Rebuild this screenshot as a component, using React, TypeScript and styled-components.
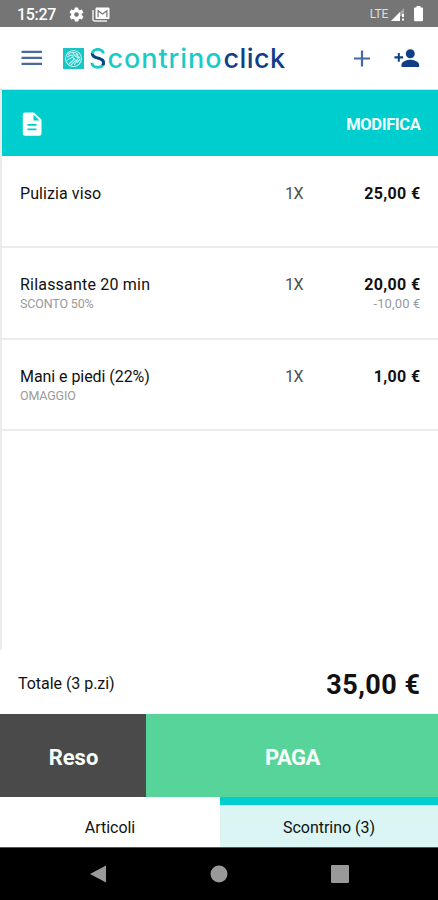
import React from 'react';
import styled, { createGlobalStyle } from 'styled-components';

const teal = '#00cdcd';
const navy = '#103f86';

const GlobalStyle = createGlobalStyle`
  * { box-sizing: border-box; }
  body { margin: 0; background: #fff; font-family: Roboto, sans-serif; }
  button { font-family: inherit; border: 0; padding: 0; background: none; }
`;

const Screen = styled.div`
  width: 438px;
  height: 900px;
  display: flex;
  flex-direction: column;
  background: #fff;
  color: #111;
  overflow: hidden;
`;

const StatusBar = styled.div`
  height: 27px;
  flex: none;
  display: flex;
  align-items: center;
  padding: 1px 15px 0 17px;
  background: #757575;
  color: #fff;
`;

const Clock = styled.span`
  width: 51px;
  font-size: 16px;
  font-weight: 500;
  letter-spacing: -0.3px;
`;

const StatusIcon = styled.svg<{ $gap?: number }>`
  flex: none;
  margin-right: ${(p) => p.$gap ?? 0}px;
  fill: #fff;
`;

const Network = styled.span`
  margin: 0 3px 0 auto;
  font-size: 12px;
  color: #dedede;
  letter-spacing: -0.2px;
`;

const AppBar = styled.header`
  height: 63px;
  flex: none;
  display: flex;
  align-items: center;
  padding: 0 18px 0 21px;
  border-bottom: 1px solid #b5eeee;
`;

const IconButton = styled.button<{ $gap?: number }>`
  display: flex;
  margin-right: ${(p) => p.$gap ?? 0}px;
`;

const Logo = styled.div`
  display: flex;
  align-items: center;
  margin-right: auto;
  font-family: Inter, sans-serif;
  font-size: 27px;
  font-weight: 550;
  line-height: 40px;
`;

const LogoMark = styled.svg`
  margin: 0 5px 0 0;
`;

const Brand = styled.span`
  padding-top: 2px;
  color: #1bcac8;
  letter-spacing: 0.95px;
`;

const BrandInitial = styled.span`
  color: transparent;
  background: linear-gradient(205deg, transparent 44%, ${navy} 45%, ${navy} 60%, transparent 61%), #1bcac8;
  background-clip: text;
  -webkit-background-clip: text;
`;

const BrandSuffix = styled.span`
  padding: 2px 0 0 1px;
  color: ${navy};
  letter-spacing: 0.45px;
`;

const Receipt = styled.main`
  height: 560px;
  flex: none;
  border-left: 2px solid #ebebeb;
`;

const ReceiptHeader = styled.div`
  height: 66px;
  display: flex;
  align-items: center;
  justify-content: space-between;
  padding: 2px 17.5px 0 19px;
  background: ${teal};
`;

const EditButton = styled.button`
  color: #effcfc;
  font-size: 16.5px;
  font-weight: 700;
  line-height: 20px;
  letter-spacing: -0.35px;
  padding-top: 1px;
`;

const Item = styled.div<{ $height: number; $top: number }>`
  height: ${(p) => p.$height}px;
  display: grid;
  grid-template-columns: 1fr 41px 96px;
  grid-template-rows: 20px 18px;
  padding: ${(p) => p.$top}px 17.5px 0 18px;
  border-bottom: 2px solid #ebebeb;
`;

const ItemName = styled.span<{ $spacing: number }>`
  font-size: 16px;
  font-weight: 450;
  line-height: 20px;
  letter-spacing: ${(p) => p.$spacing}px;
`;

const Quantity = styled.span`
  padding-left: 1.5px;
  font-size: 16px;
  line-height: 20px;
  color: #505050;
  letter-spacing: -0.5px;
`;

const Price = styled.span`
  text-align: right;
  font-size: 16px;
  font-weight: 700;
  line-height: 20px;
  letter-spacing: 0.35px;
`;

const Note = styled.span`
  grid-column: 1 / 3;
  font-size: 12.5px;
  line-height: 18px;
  letter-spacing: -0.16px;
  color: #9a9a9a;
`;

const Discount = styled.span`
  text-align: right;
  font-size: 13px;
  line-height: 18px;
  letter-spacing: 0.15px;
  color: #9a9a9a;
`;

const TotalRow = styled.div`
  height: 64px;
  flex: none;
  display: flex;
  align-items: center;
  justify-content: space-between;
  padding: 5px 17.5px 0 18px;
`;

const TotalLabel = styled.span`
  font-size: 16px;
  font-weight: 450;
  letter-spacing: -0.04px;
  padding-bottom: 2px;
`;

const TotalValue = styled.span`
  font-size: 27px;
  font-weight: 700;
  letter-spacing: 0.5px;
`;

const Actions = styled.div`
  height: 83px;
  flex: none;
  display: grid;
  grid-template-columns: 146px 1fr;
`;

const ActionButton = styled.button<{ $color: string; $spacing?: number }>`
  padding: 4px 0 0 1px;
  background: ${(p) => p.$color};
  color: #f8fffb;
  font-size: 22px;
  font-weight: 700;
  letter-spacing: ${(p) => p.$spacing ?? 0}px;
`;

const Tabs = styled.nav`
  height: 50px;
  flex: none;
  display: grid;
  grid-template-columns: 220px 1fr;
`;

const Tab = styled.button<{ $active?: boolean }>`
  border-top: 8px solid ${(p) => (p.$active ? teal : '#fff')};
  background: ${(p) => (p.$active ? '#daf5f4' : '#fff')};
  color: #111;
  font-size: 16px;
  font-weight: 450;
  letter-spacing: -0.04px;
  padding-top: 3px;
`;

const SystemNav = styled.footer`
  flex: 1;
  display: flex;
  align-items: center;
  justify-content: space-between;
  padding: 0 89px;
  border-top: 1px solid #555;
  background: #000;
`;

interface Line {
  name: string;
  spacing: number;
  price: string;
  height: number;
  top: number;
  note?: string;
  discount?: string;
}

const lines: Line[] = [
  { name: 'Pulizia viso', spacing: 0.08, price: '25,00 €', height: 92, top: 28 },
  { name: 'Rilassante 20 min', spacing: 0.2, price: '20,00 €', height: 92, top: 27, note: 'SCONTO 50%', discount: '-10,00 €' },
  { name: 'Mani e piedi (22%)', spacing: -0.06, price: '1,00 €', height: 91, top: 27, note: 'OMAGGIO' },
];

export default function App() {
  return (
    <>
      <GlobalStyle />
      <Screen>
        <StatusBar>
          <Clock>15:27</Clock>
          <StatusIcon $gap={7} width="17" height="17" viewBox="0 0 24 24">
            <path d="M19.4 13a7.5 7.5 0 0 0 0-2l2.1-1.6a.5.5 0 0 0 .1-.6l-2-3.5a.5.5 0 0 0-.6-.2l-2.5 1a7.3 7.3 0 0 0-1.7-1l-.4-2.6A.5.5 0 0 0 14 2h-4a.5.5 0 0 0-.5.4l-.4 2.7a7.3 7.3 0 0 0-1.7 1l-2.5-1a.5.5 0 0 0-.6.2l-2 3.5a.5.5 0 0 0 .1.6L4.6 11a7.5 7.5 0 0 0 0 2l-2.1 1.6a.5.5 0 0 0-.1.6l2 3.5c.1.2.4.3.6.2l2.5-1c.5.4 1.1.7 1.7 1l.4 2.7c0 .2.2.4.5.4h4c.2 0 .5-.2.5-.4l.4-2.7a7.3 7.3 0 0 0 1.7-1l2.5 1c.2.1.5 0 .6-.2l2-3.5a.5.5 0 0 0-.1-.6zM12 15.3a3.3 3.3 0 1 1 0-6.6 3.3 3.3 0 0 1 0 6.6z" />
          </StatusIcon>
          <StatusIcon width="18" height="15" viewBox="0 0 18 15">
            <path d="M1 3v9.5A1.5 1.5 0 0 0 2.5 14H15" fill="none" stroke="#eee" strokeWidth="1.5" />
            <path fillRule="evenodd" d="M4.5.5h12a1 1 0 0 1 1 1v9.5a1 1 0 0 1-1 1h-12a1 1 0 0 1-1-1V1.5a1 1 0 0 1 1-1zM5.5 2.5v7.7h1.2V5l3.8 2.8L14.3 5v5.2h1.2V2.5l-5 3.7z" />
          </StatusIcon>
          <Network>LTE</Network>
          <StatusIcon $gap={8} width="14" height="13" viewBox="0 0 14 13">
            <path d="M13 0v8H9v5H0z" opacity=".35" />
            <path d="M9 4v9H0zM11 6h2v3h-2zM11 10.5h2v2h-2z" />
          </StatusIcon>
          <StatusIcon $gap={-1} width="11" height="16" viewBox="0 0 11 16">
            <path d="M3.5 0h4v1.5h1.5a1 1 0 0 1 1 1V14a1.2 1.2 0 0 1-1.2 1.2H2.2A1.2 1.2 0 0 1 1 14V2.5a1 1 0 0 1 1-1h1.5z" />
          </StatusIcon>
        </StatusBar>

        <AppBar>
          <IconButton $gap={21} aria-label="Menu">
            <svg width="21" height="16" viewBox="0 0 21 16" fill="#4a6aa3">
              <path d="M.5.7h20.5v2.2H.5zM.5 6.7h20.5v2.2H.5zM.5 12.7h20.5v2.2H.5z" />
            </svg>
          </IconButton>
          <Logo>
            <LogoMark width="21" height="21" viewBox="0 0 21 21" fill="none">
              <path d="M0 0h21v21H0z" fill="#16c6c5" />
              <g stroke="#b9efed" strokeWidth="1.1" strokeLinecap="round">
                <circle cx="10.5" cy="10.5" r="8" />
                <path d="M5 6.5c3-3 7-3 10 0M4.5 9c2-2 4-2.5 6-1M4.5 12l5-3 2 2-5 4.5M8 17l5-5M12 8l3.5 2-4 6.5M13 6.5l4 3.5M14 14.5l3-3M10 5l2 3" />
              </g>
            </LogoMark>
            <Brand>
              <BrandInitial>S</BrandInitial>contrino
            </Brand>
            <BrandSuffix>click</BrandSuffix>
          </Logo>
          <IconButton $gap={23} aria-label="Aggiungi">
            <svg width="18" height="18" viewBox="0 0 18 18" stroke="#4569a4" strokeWidth="2.2">
              <path d="M9 1.5v16M1 9.5h16" />
            </svg>
          </IconButton>
          <IconButton aria-label="Aggiungi cliente">
            <svg width="26" height="20" viewBox="0 -0.5 26 20" fill={navy}>
              <circle cx="16.3" cy="5.2" r="4.5" />
              <path d="M7.5 18.5v-2.2c0-3.3 5.6-5 8.8-5s8.8 1.7 8.8 5v2.2zM3.8 4.5H5.8v3.3h3.3V10H5.8v3.3H3.8V10H.5V7.8h3.3z" />
            </svg>
          </IconButton>
        </AppBar>

        <Receipt>
          <ReceiptHeader>
            <svg width="24" height="24" viewBox="0 0 24 24">
              <path fillRule="evenodd" fill="#fff" d="M4 .5h9l7.5 7v14a2.2 2.2 0 0 1-2.2 2.2H4a2.2 2.2 0 0 1-2.2-2.2V2.7A2.2 2.2 0 0 1 4 .5zM12.5 2.5V8.5h6zM6.5 12v1.8h9V12zM6.5 16.5v1.8h9v-1.8z" />
            </svg>
            <EditButton>MODIFICA</EditButton>
          </ReceiptHeader>
          {lines.map((line) => (
            <Item key={line.name} $height={line.height} $top={line.top}>
              <ItemName $spacing={line.spacing}>{line.name}</ItemName>
              <Quantity>1X</Quantity>
              <Price>{line.price}</Price>
              <Note>{line.note}</Note>
              <Discount>{line.discount}</Discount>
            </Item>
          ))}
        </Receipt>

        <TotalRow>
          <TotalLabel>Totale (3 p.zi)</TotalLabel>
          <TotalValue>35,00 €</TotalValue>
        </TotalRow>
        <Actions>
          <ActionButton $color="#4a4a4a">Reso</ActionButton>
          <ActionButton $color="#57d499" $spacing={-0.5}>PAGA</ActionButton>
        </Actions>
        <Tabs>
          <Tab>Articoli</Tab>
          <Tab $active>Scontrino (3)</Tab>
        </Tabs>
        <SystemNav>
          <svg width="18" height="18" viewBox="0 0 18 18" fill="#999">
            <path d="M17 .5v17L1 9z" />
          </svg>
          <svg width="18" height="18" viewBox="0 0 18 18" fill="#999">
            <circle cx="9" cy="9" r="8.5" />
          </svg>
          <svg width="18" height="18" viewBox="0 0 18 18" fill="#999">
            <rect width="18" height="18" rx="1" />
          </svg>
        </SystemNav>
      </Screen>
    </>
  );
}
